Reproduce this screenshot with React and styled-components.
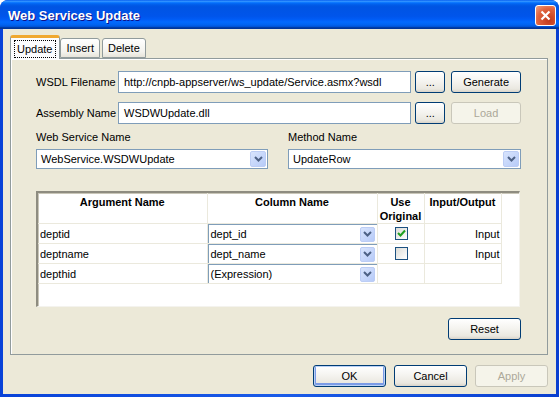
import React from "react";
import styled, { createGlobalStyle } from "styled-components";

const Global = createGlobalStyle`
  body { margin: 0; background: #fff; }
  * { box-sizing: border-box; }
`;

const FONT = `"Liberation Sans", Arial, sans-serif`;

export default function App() {
  return (
    <>
      <Global />
      <Window>
        <TitleBar>
          <span>Web Services Update</span>
          <CloseBox>
            <svg width="11" height="11" viewBox="0 0 11 11">
              <path d="M1.5 1.5 L9.5 9.5 M9.5 1.5 L1.5 9.5" stroke="#fff" strokeWidth="2.2" />
            </svg>
          </CloseBox>
        </TitleBar>
        <Client>
          <TabStrip>
            <Tab $active><Focus>Update</Focus></Tab>
            <Tab>Insert</Tab>
            <Tab>Delete</Tab>
          </TabStrip>
          <Panel>
            <FormRow>
              <Label $w={82}>WSDL Filename</Label>
              <TextBox $w={294}>http://cnpb-appserver/ws_update/Service.asmx?wsdl</TextBox>
              <Button $w={30} $ml={4}>...</Button>
              <Button $w={70} $ml={6}>Generate</Button>
            </FormRow>
            <FormRow $mt={9}>
              <Label $w={82}>Assembly Name</Label>
              <TextBox $w={294}>WSDWUpdate.dll</TextBox>
              <Button $w={30} $ml={4}>...</Button>
              <Button $w={70} $ml={6} disabled>Load</Button>
            </FormRow>
            <PickRow>
              <Pick $w={232}>
                <Label>Web Service Name</Label>
                <Combo>
                  <span>WebService.WSDWUpdate</span>
                  <DropBtn><Chevron /></DropBtn>
                </Combo>
              </Pick>
              <Pick $w={233}>
                <Label>Method Name</Label>
                <Combo>
                  <span>UpdateRow</span>
                  <DropBtn><Chevron /></DropBtn>
                </Combo>
              </Pick>
            </PickRow>
            <GridBox>
              <Grid>
                <colgroup>
                  <col style={{ width: 169 }} />
                  <col style={{ width: 170 }} />
                  <col style={{ width: 47 }} />
                  <col style={{ width: 77 }} />
                </colgroup>
                <thead>
                  <tr>
                    <Th>Argument Name</Th>
                    <Th>Column Name</Th>
                    <Th>Use<br />Original</Th>
                    <Th>Input/Output</Th>
                  </tr>
                </thead>
                <tbody>
                  {rows.map((r) => (
                    <tr key={r.arg}>
                      <Td>{r.arg}</Td>
                      <Td $pad={0}>
                        <CellCombo>
                          <span>{r.col}</span>
                          <CellDrop><Chevron /></CellDrop>
                        </CellCombo>
                      </Td>
                      <Td $align="center">
                        {r.check !== undefined && (
                          <Check>
                            {r.check && (
                              <svg width="9" height="9" viewBox="0 0 9 9">
                                <path d="M1 4 L3.5 6.5 L8 1.5" stroke="#21A121" strokeWidth="2" fill="none" />
                              </svg>
                            )}
                          </Check>
                        )}
                      </Td>
                      <Td $align="right">{r.io}</Td>
                    </tr>
                  ))}
                </tbody>
              </Grid>
            </GridBox>
            <ResetRow>
              <Button $w={73}>Reset</Button>
            </ResetRow>
          </Panel>
          <Footer>
            <Button $w={73} $default>OK</Button>
            <Button $w={73}>Cancel</Button>
            <Button $w={73} disabled>Apply</Button>
          </Footer>
        </Client>
      </Window>
    </>
  );
}

const rows = [
  { arg: "deptid", col: "dept_id", check: true, io: "Input" },
  { arg: "deptname", col: "dept_name", check: false, io: "Input" },
  { arg: "depthid", col: "(Expression)", io: "" },
];

function Chevron() {
  return (
    <svg width="9" height="6" viewBox="0 0 9 6">
      <path d="M1 1 L4.5 4.5 L8 1" stroke="#4D6185" strokeWidth="2" fill="none" />
    </svg>
  );
}

const Window = styled.div`
  width: 559px;
  height: 397px;
  display: flex;
  flex-direction: column;
  background: linear-gradient(to right, #0842D8, #1A5BE8 50%, #0A3FD0);
  border-radius: 8px 8px 0 0;
  overflow: hidden;
  font-family: ${FONT};
  font-size: 11px;
  color: #000;
`;

const TitleBar = styled.div`
  height: 29px;
  flex: none;
  display: flex;
  align-items: center;
  justify-content: space-between;
  padding: 1px 3px 0 8px;
  color: #fff;
  font: bold 13px ${FONT};
  text-shadow: 1px 1px #0F1089;
  background: linear-gradient(
    to bottom,
    #0058ee 0%,
    #3593ff 4%,
    #288eff 6%,
    #127dff 8%,
    #036ffc 10%,
    #0262ee 14%,
    #0057e5 20%,
    #0054e3 24%,
    #0055eb 56%,
    #005bf5 66%,
    #026afe 76%,
    #0062ef 86%,
    #0052d6 92%,
    #0040ab 94%,
    #003092 100%
  );
`;

const CloseBox = styled.div`
  width: 21px;
  height: 21px;
  border: 1px solid #fff;
  border-radius: 3px;
  display: flex;
  align-items: center;
  justify-content: center;
  background: radial-gradient(circle at 70% 75%, #C0391B, #E0633E 60%, #EFA386);
`;

const Client = styled.div`
  flex: 1;
  margin: 0 3px 3px 3px;
  background: #ECE9D8;
  display: flex;
  flex-direction: column;
  padding: 6px 8px 0 7px;
`;

const TabStrip = styled.div`
  height: 23px;
  display: flex;
  align-items: flex-end;
  position: relative;
  z-index: 1;
`;

const Tab = styled.div`
  height: ${(p) => (p.$active ? 24 : 20)}px;
  padding: 0 ${(p) => (p.$active ? 3 : 5)}px;
  margin-right: ${(p) => (p.$active ? 0 : 2)}px;
  display: flex;
  align-items: center;
  border: 1px solid #919B9C;
  border-bottom: ${(p) => (p.$active ? "none" : "1px solid #919B9C")};
  border-top: ${(p) => (p.$active ? "3px solid #F0A830" : "1px solid #919B9C")};
  border-radius: 3px 3px 0 0;
  background: ${(p) =>
    p.$active ? "#FCFCFE" : "linear-gradient(#FFFFFF, #F4F3EE 70%, #E7E4DA)"};
  margin-bottom: ${(p) => (p.$active ? -1 : 0)}px;
`;

const Focus = styled.span`
  border: 1px dotted #000;
  padding: 2px 3px 2px 2px;
`;

const Panel = styled.div`
  height: 297px;
  border: 1px solid #919B9C;
  box-shadow: inset 1px 1px #fff;
  display: flex;
  flex-direction: column;
  padding: 12px 26px 0 25px;
`;

const FormRow = styled.div`
  display: flex;
  align-items: center;
  height: 22px;
  margin-top: ${(p) => p.$mt || 0}px;
`;

const Label = styled.div`
  width: ${(p) => (p.$w ? `${p.$w}px` : "auto")};
  flex: none;
  white-space: nowrap;
`;

const TextBox = styled.div`
  width: ${(p) => p.$w}px;
  height: 22px;
  border: 1px solid #7F9DB9;
  background: #fff;
  padding: 0 5px;
  display: flex;
  align-items: center;
  white-space: nowrap;
  overflow: hidden;
`;

const Button = styled.button`
  width: ${(p) => p.$w}px;
  height: 22px;
  margin-left: ${(p) => p.$ml || 0}px;
  padding: 0;
  font: 11px ${FONT};
  border: 1px solid ${(p) => (p.disabled ? "#C9C7BA" : "#003C74")};
  border-radius: 3px;
  color: ${(p) => (p.disabled ? "#ACA899" : "#000")};
  background: ${(p) =>
    p.disabled
      ? "#F5F4EA"
      : "linear-gradient(#FFFFFF, #F5F4F0 45%, #EAE8E0 85%, #D8D3C9)"};
  box-shadow: ${(p) =>
    p.$default ? "inset 0 0 0 1px #B9D1F6, inset 0 -1px 0 2px #7B9BE6" : "none"};
`;

const PickRow = styled.div`
  display: flex;
  gap: 20px;
  margin-top: 7px;
`;

const Pick = styled.div`
  width: ${(p) => p.$w}px;
  display: flex;
  flex-direction: column;
  gap: 6px;
`;

const Combo = styled.div`
  height: 20px;
  border: 1px solid #7F9DB9;
  background: #fff;
  display: flex;
  align-items: center;
  justify-content: space-between;
  padding: 0 1px 0 4px;
`;

const DropBtn = styled.div`
  width: 16px;
  height: 16px;
  border-radius: 2px;
  background: linear-gradient(135deg, #D8E4FD, #B7CBF8);
  border: 1px solid #BCCDF5;
  display: flex;
  align-items: center;
  justify-content: center;
`;

const GridBox = styled.div`
  margin-top: 22px;
  width: 484px;
  height: 116px;
  background: #fff;
  border-style: solid;
  border-width: 2px 1px 1px 2px;
  border-color: #8E8C80 #F4F3EE #F4F3EE #8E8C80;
  box-shadow: inset 1px 1px #C9C6B8;
`;

const Grid = styled.table`
  border-collapse: collapse;
  table-layout: fixed;
  width: 463px;
`;

const Th = styled.th`
  height: 30px;
  vertical-align: top;
  font: bold 11px ${FONT};
  text-align: center;
  padding: 2px 0 0;
  line-height: 14px;
  border-right: 1px solid #EBE9DD;
  border-bottom: 1px solid #EBE9DD;
`;

const Td = styled.td`
  height: 20px;
  padding: ${(p) => (p.$pad !== undefined ? p.$pad : "0 1px 0 2px")};
  text-align: ${(p) => p.$align || "left"};
  border-right: 1px solid #EBE9DD;
  border-bottom: 1px solid #EBE9DD;
  white-space: nowrap;
  line-height: 14px;
`;

const CellCombo = styled.div`
  height: 19px;
  border-top: 1px solid #7F9DB9;
  border-left: 1px solid #7F9DB9;
  display: flex;
  align-items: center;
  justify-content: space-between;
  padding: 0 2px 0 2px;
`;

const CellDrop = styled(DropBtn)`
  width: 15px;
  height: 15px;
`;

const Check = styled.div`
  width: 13px;
  height: 13px;
  margin: 0 auto;
  border: 1px solid #1C5180;
  background: linear-gradient(135deg, #DCDCD7, #FFFFFF);
  display: flex;
  align-items: center;
  justify-content: center;
`;

const ResetRow = styled.div`
  display: flex;
  justify-content: flex-end;
  margin-top: 11px;
`;

const Footer = styled.div`
  display: flex;
  justify-content: flex-end;
  gap: 8px;
  margin-top: 10px;
`;
